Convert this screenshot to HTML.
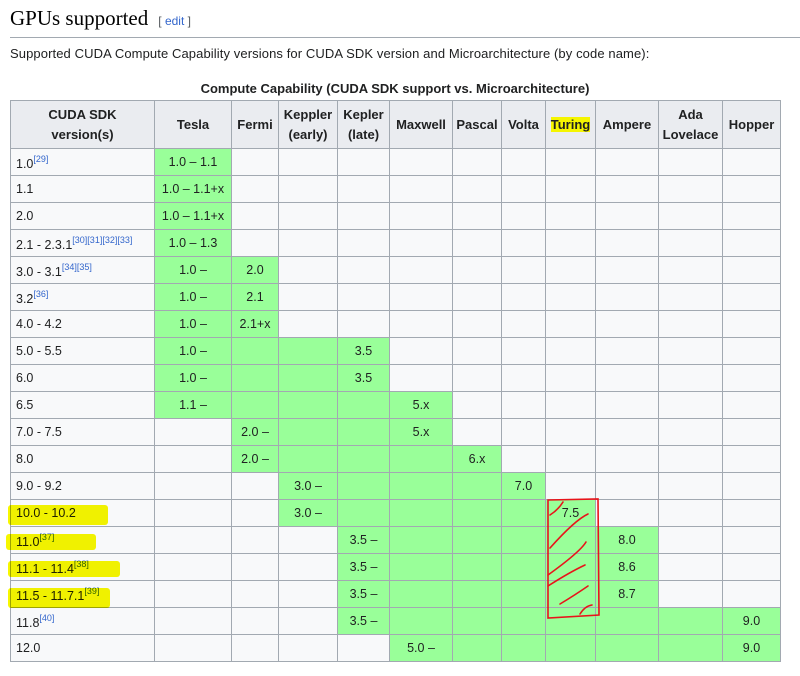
<!DOCTYPE html>
<html><head><meta charset="utf-8"><style>
body{margin:0;background:#fff;font-family:"Liberation Sans","Noto Sans CJK KR",sans-serif;color:#202122;width:800px;height:676px;overflow:hidden;position:relative}
h2{position:absolute;left:10px;top:6px;margin:0;font-family:"Liberation Serif",serif;font-weight:normal;font-size:21px;color:#000}
h2 span{font-family:"Liberation Sans",sans-serif;font-size:12px;color:#54595d;margin-left:10px}
h2 span a{color:#3366cc}
.hr{position:absolute;left:10px;top:37px;width:790px;height:1px;background:#a2a9b1}
p{position:absolute;left:10px;top:46px;margin:0;font-size:13px;letter-spacing:0.1px}
.cap{position:absolute;left:10px;width:770px;top:81px;text-align:center;font-weight:bold;font-size:13px}
table{position:absolute;left:10px;top:100px;border-collapse:collapse;table-layout:fixed;font-size:12.5px;width:770px}
td,th{border:1px solid #a2a9b1;padding:0;text-align:center;background:#f8f9fa;height:26px;white-space:nowrap}
th{background:#eaecf0;height:47px;font-size:13px;line-height:20px}
td.f{text-align:left;padding-left:5px}
td.g{background:#9f9}
sup{font-size:9px;color:#3366cc;vertical-align:6px}
.hl{background:#f5f500}
</style></head><body>
<h2>GPUs supported<span>[ <a>edit</a> ]</span></h2>
<div class="hr"></div>
<p>Supported CUDA Compute Capability versions for CUDA SDK version and Microarchitecture (by code name):</p>
<div class="cap">Compute Capability (CUDA SDK support vs. Microarchitecture)</div>
<table id="t">
<colgroup><col style="width:144px"><col style="width:77px"><col style="width:47px"><col style="width:59px"><col style="width:52px"><col style="width:63px"><col style="width:49px"><col style="width:44px"><col style="width:50px"><col style="width:63px"><col style="width:64px"><col style="width:58px"></colgroup>
<tr><th>CUDA SDK<br>version(s)</th><th>Tesla</th><th>Fermi</th><th>Keppler<br>(early)</th><th>Kepler<br>(late)</th><th>Maxwell</th><th>Pascal</th><th>Volta</th><th><span class="hl">Turing</span></th><th>Ampere</th><th>Ada<br>Lovelace</th><th>Hopper</th></tr>
</table>
<svg width="800" height="676" style="position:absolute;left:0;top:0" fill="none">
<g fill="#f7f700" style="mix-blend-mode:multiply">
<rect x="8" y="505" width="100" height="20" rx="3"/>
<rect x="6" y="534" width="90" height="16" rx="3"/>
<rect x="8" y="561" width="112" height="16" rx="3"/>
<rect x="8" y="588" width="102" height="20" rx="3"/>
</g>
<g stroke="#e8141a" stroke-width="1.6" stroke-linecap="round">
<path d="M548 500 L598 499 L599 615 L548 618 Z"/>
<path d="M550 515 Q558 510 563 502"/>
<path d="M550 548 Q575 520 588 514"/>
<path d="M548 575 Q580 552 586 542"/>
<path d="M548 586 Q570 572 585 565"/>
<path d="M560 604 Q575 595 588 586"/>
<path d="M580 614 Q585 606 592 605"/>
</g>
</svg>
<script>
var rows=[
["1.0<sup>[29]</sup>",1,1,{1:"1.0 – 1.1"}],
["1.1",1,1,{1:"1.0 – 1.1+x"}],
["2.0",1,1,{1:"1.0 – 1.1+x"}],
["2.1 - 2.3.1<sup>[30][31][32][33]</sup>",1,1,{1:"1.0 – 1.3"}],
["3.0 - 3.1<sup>[34][35]</sup>",1,2,{1:"1.0 –",2:"2.0"}],
["3.2<sup>[36]</sup>",1,2,{1:"1.0 –",2:"2.1"}],
["4.0 - 4.2",1,2,{1:"1.0 –",2:"2.1+x"}],
["5.0 - 5.5",1,4,{1:"1.0 –",4:"3.5"}],
["6.0",1,4,{1:"1.0 –",4:"3.5"}],
["6.5",1,5,{1:"1.1 –",5:"5.x"}],
["7.0 - 7.5",2,5,{2:"2.0 –",5:"5.x"}],
["8.0",2,6,{2:"2.0 –",6:"6.x"}],
["9.0 - 9.2",3,7,{3:"3.0 –",7:"7.0"}],
["10.0 - 10.2",3,8,{3:"3.0 –",8:"7.5"}],
["11.0<sup>[37]</sup>",4,9,{4:"3.5 –",9:"8.0"}],
["11.1 - 11.4<sup>[38]</sup>",4,9,{4:"3.5 –",9:"8.6"}],
["11.5 - 11.7.1<sup>[39]</sup>",4,9,{4:"3.5 –",9:"8.7"}],
["11.8<sup>[40]</sup>",4,11,{4:"3.5 –",11:"9.0"}],
["12.0",5,11,{5:"5.0 –",11:"9.0"}]];
var h="";rows.forEach(function(r){h+='<tr><td class="f">'+r[0]+'</td>';for(var i=1;i<=11;i++){h+='<td'+(i>=r[1]&&i<=r[2]?' class="g"':'')+'>'+(r[3][i]||'')+'</td>';}h+='</tr>';});
document.getElementById('t').insertAdjacentHTML('beforeend',h);
</script>
</body></html>
